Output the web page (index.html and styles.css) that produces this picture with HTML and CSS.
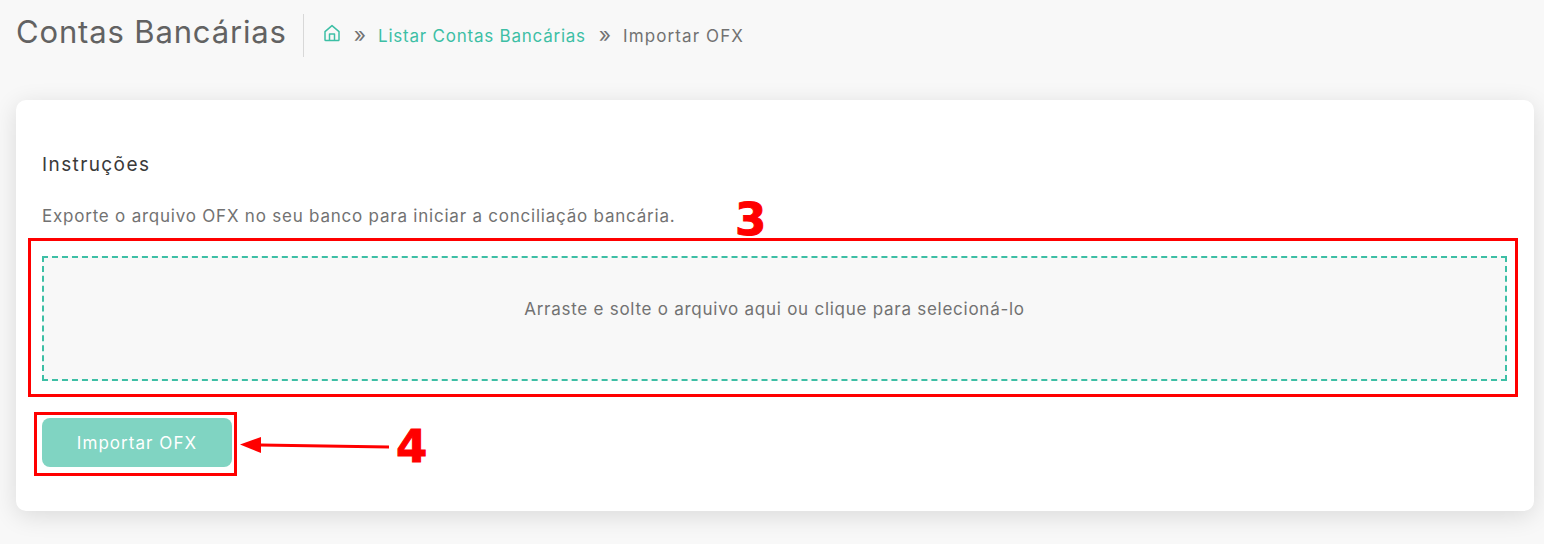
FILE: index.html
```html
<!DOCTYPE html>
<html lang="en">
<head>
    <meta charset="UTF-8">
    <meta name="viewport" content="width=device-width, initial-scale=1.0">
    <title>Contas Bancárias</title>
    <link rel="stylesheet" href="styles.css">
</head>
<body>
    <div class="page-head">
        <h1>Contas Bancárias</h1>
        <div class="crumbs">
            <svg class="home" width="18" height="18" viewBox="0 0 18 18" fill="none" stroke="#3dbfa5" stroke-width="1.5" stroke-linejoin="round">
                <path d="M2 7.6 9 1.6l7 6v8.2a.8.8 0 0 1-.8.8H2.800a.8.8 0 0 1-.8-.8z"/>
                <path d="M6.500 16.500v-6.500h5v6.500"/>
            </svg>
            <span class="sep">»</span>
            <a href="#">Listar Contas Bancárias</a>
            <span class="sep">»</span>
            <span class="current">Importar OFX</span>
        </div>
    </div>

    <div class="card">
        <h2>Instruções</h2>
        <p>Exporte o arquivo OFX no seu banco para iniciar a conciliação bancária.</p>
        <div class="dropzone">Arraste e solte o arquivo aqui ou clique para selecioná-lo</div>
        <button class="btn" disabled>Importar OFX</button>
    </div>

    <!-- Annotations -->
    <div class="mark mark-zone"></div>
    <div class="mark mark-btn"></div>
    <span class="num num-3">3</span>
    <span class="num num-4">4</span>
    <svg class="arrow" width="150" height="24" viewBox="0 0 150 24">
        <path d="M149 14 20 12" stroke="#f00" stroke-width="3" fill="none"/>
        <path d="M0 11.500 21 4v16z" fill="#f00"/>
    </svg>
</body>
</html>
```

FILE: styles.css
```css
body {
    font-family: Inter, "Liberation Sans", sans-serif;
    background-color: #f8f8f8;
    margin: 0;
    padding: 14px 10px 0 16px;
    color: #666;
    position: relative;
    height: 530px;
    overflow: hidden;
}

.page-head {
    display: flex;
    align-items: flex-start;
    height: 43px;
}

h1 {
    margin: 0;
    padding-right: 16px;
    height: 43px;
    border-right: 1px solid #d8d8d8;
    font-size: 31px;
    font-weight: 400;
    line-height: 35px;
    letter-spacing: 0.85px;
    white-space: nowrap;
    color: #626262;
}

.crumbs {
    display: flex;
    align-items: center;
    height: 43px;
    margin-left: 19px;
    font-size: 17px;
    letter-spacing: 0.77px;
    color: #727272;
}

.crumbs a {
    color: #3dbfa5;
    text-decoration: none;
}

.crumbs .current {
    letter-spacing: 1.1px;
}

.home {
    margin-top: -5px;
}

.sep {
    margin: -3px 12px 0 13px;
    font-size: 21px;
    letter-spacing: 0;
}

.card {
    margin-top: 43px;
    width: 1518px;
    height: 411px;
    box-sizing: border-box;
    padding: 54px 27px 0 26px;
    background-color: #fff;
    border-radius: 10px;
    box-shadow: 0 5px 25px rgba(0, 0, 0, 0.12);
}

h2 {
    margin: 0;
    font-size: 19px;
    font-weight: 400;
    line-height: 22px;
    letter-spacing: 1.4px;
    color: #3a3a3a;
}

.card p {
    margin: 30px 0 0;
    font-size: 17px;
    line-height: 20px;
    letter-spacing: 0.78px;
    color: #727272;
}

.dropzone {
    margin-top: 30px;
    height: 125px;
    box-sizing: border-box;
    padding-top: 40px;
    background-color: #f8f8f8;
    border: 2px dashed #3dbfa5;
    text-align: center;
    font-size: 17px;
    line-height: 22px;
    letter-spacing: 0.74px;
    color: #727272;
}

.btn {
    display: block;
    margin-top: 37px;
    width: 190px;
    height: 49px;
    padding: 0;
    background-color: #80d4c2;
    border: none;
    border-radius: 8px;
    color: #fff;
    font-family: inherit;
    font-size: 17px;
    letter-spacing: 1.05px;
}

.mark {
    position: absolute;
    box-sizing: border-box;
    border: 3px solid #f00;
}

.mark-zone {
    left: 28px;
    top: 238px;
    width: 1490px;
    height: 159px;
}

.mark-btn {
    left: 34px;
    top: 412px;
    width: 203px;
    height: 64px;
}

.num {
    position: absolute;
    font-family: "DejaVu Sans", sans-serif;
    font-weight: 700;
    font-size: 45px;
    line-height: 44px;
    color: #f00;
    -webkit-text-stroke: 1px #f00;
}

.num-3 {
    left: 735px;
    top: 198px;
}

.num-4 {
    left: 396px;
    top: 425px;
}

.arrow {
    position: absolute;
    left: 240px;
    top: 433px;
}
```
